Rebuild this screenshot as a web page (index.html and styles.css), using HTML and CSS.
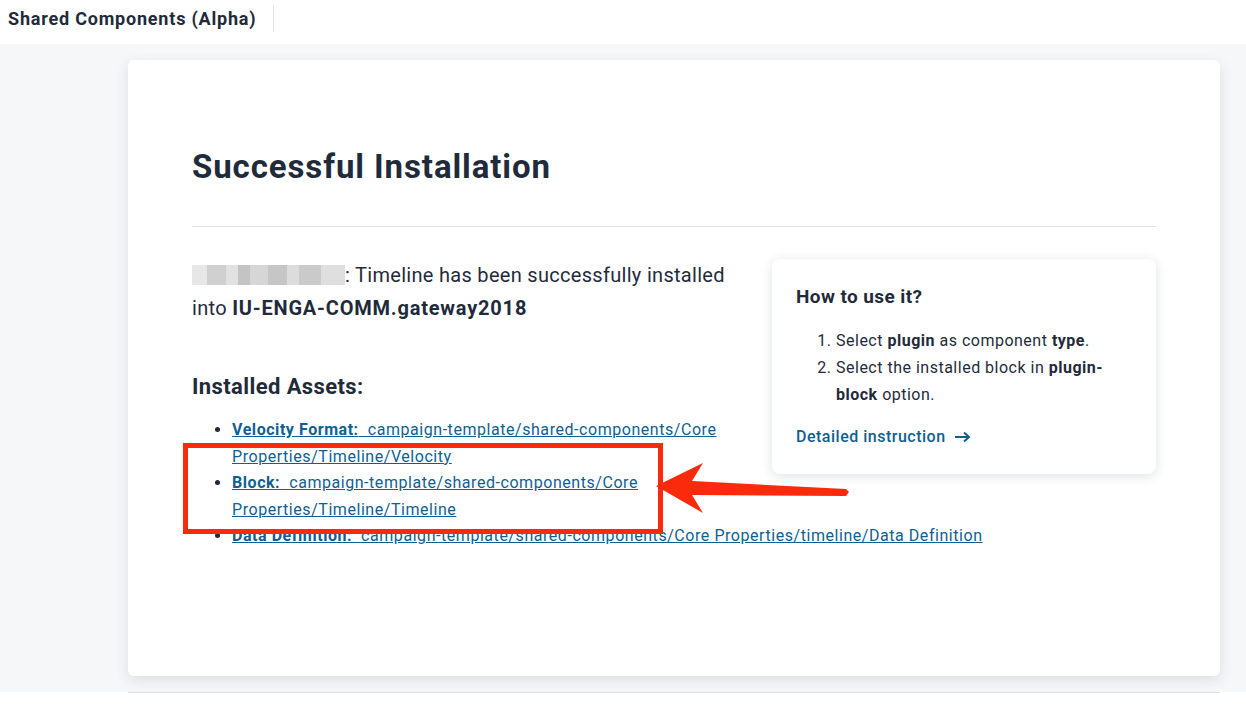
FILE: index.html
```html
<!DOCTYPE html>
<html lang="en">
<head>
    <meta charset="UTF-8">
    <meta name="viewport" content="width=device-width, initial-scale=1.0">
    <title>Shared Components (Alpha)</title>
    <link rel="stylesheet" href="styles.css">
</head>
<body>
    <div class="topbar">
        <span class="app-title">Shared Components (Alpha)</span>
        <span class="divider"></span>
    </div>

    <div class="main">
        <div class="card">
            <h1>Successful Installation</h1>
            <hr>

            <div class="howto">
                <h3>How to use it?</h3>
                <ol>
                    <li>Select <b>plugin</b> as component <b>type</b>.</li>
                    <li>Select the installed block in <b>plugin-block</b> option.</li>
                </ol>
                <a href="#" class="more">Detailed instruction
                    <svg class="arrow" width="17" height="12" viewBox="0 0 17 12"><path d="M1 6h14M10 1.5l5 4.5-5 4.5" fill="none" stroke="currentColor" stroke-width="2"/></svg>
                </a>
            </div>

            <p class="intro"><span class="blurred"></span>: Timeline has been successfully installed into <b>IU-ENGA-COMM.gateway2018</b></p>

            <h2>Installed Assets:</h2>
            <ul class="assets">
                <li><a href="#"><b>Velocity Format:</b>&nbsp; campaign-template/shared-components/Core Properties/Timeline/Velocity</a></li>
                <li><a href="#"><b>Block:</b>&nbsp; campaign-template/shared-components/Core Properties/Timeline/Timeline</a></li>
                <li><a href="#"><b>Data Definition:</b>&nbsp; campaign-template/shared-components/Core Properties/timeline/Data Definition</a></li>
            </ul>
        </div>
    </div>
    <div class="footer"></div>

    <!-- annotation drawn over the screenshot -->
    <svg class="annotation" width="1246" height="704" viewBox="0 0 1246 704">
        <rect x="185.5" y="445.5" width="475" height="86" fill="none" stroke="#fb2a0c" stroke-width="5"/>
        <polygon fill="#fb2a0c" points="656,486 703,463 692,481 846,489 849,492 846,496 692,495 703,513"/>
    </svg>
</body>
</html>
```

FILE: styles.css
```css
body {
    margin: 0;
    font-family: Roboto, "Liberation Sans", sans-serif;
    color: #1f2b3b;
    background: #fff;
}

.topbar {
    height: 44px;
    display: flex;
    align-items: flex-start;
    background: #fff;
}

.app-title {
    padding: 8px 0 0 8px;
    font-size: 18px;
    line-height: 22px;
    font-weight: bold;
    letter-spacing: 0.8px;
    color: #1f2b3b;
}

.divider {
    width: 1px;
    height: 27px;
    margin: 5px 0 0 17px;
    background: #e3e5e8;
}

.main {
    background: #f6f7f9;
    padding: 16px 26px 16px 128px;
}

.card {
    background: #fff;
    border-radius: 6px;
    box-shadow: 0 4px 14px rgba(30, 40, 60, 0.12);
    padding: 79px 64px 53px 64px;
    height: 484px;
}

h1 {
    margin: 0;
    font-size: 33px;
    line-height: 56px;
    font-weight: bold;
    letter-spacing: 0.9px;
}

hr {
    border: 0;
    border-top: 1px solid #dfe2e6;
    margin: 31px 0 32px 0;
}

.howto {
    float: right;
    width: 336px;
    margin: 0 0 16px 40px;
    padding: 24px;
    border-radius: 8px;
    box-shadow: 0 2px 12px rgba(30, 40, 60, 0.14);
    font-size: 16px;
    letter-spacing: 0.5px;
}

.howto h3 {
    margin: 0 0 16px 0;
    font-size: 19px;
    line-height: 28px;
    letter-spacing: 0.4px;
}

.howto ol {
    margin: 0 0 16px 0;
    padding-left: 40px;
    line-height: 27px;
}

.more {
    color: #0f5f93;
    font-weight: 500;
    text-decoration: none;
    line-height: 26px;
}

.more .arrow {
    margin-left: 4px;
    vertical-align: -1px;
}

.intro {
    margin: 0;
    font-size: 20px;
    line-height: 33px;
    letter-spacing: 0.3px;
}

.intro b {
    letter-spacing: 0.8px;
}

.blurred {
    display: inline-block;
    width: 153px;
    height: 20px;
    vertical-align: -3px;
    background:
        linear-gradient(90deg, #e2e2e2 0 10%, #c7c7c7 10% 22%, #dcdcdc 22% 30%, #b9b9b9 30% 38%, #cfcfcf 38% 50%, #bcbcbc 50% 62%, #d6d6d6 62% 70%, #c1c1c1 70% 84%, #d9d9d9 84% 100%);
    opacity: 0.85;
}

h2 {
    margin: 46px 0 14px 0;
    font-size: 22px;
    line-height: 32px;
    letter-spacing: 0.4px;
}

.assets {
    margin: 0;
    padding-left: 40px;
    font-size: 16px;
    line-height: 26.5px;
    letter-spacing: 0.55px;
}

.assets a {
    color: #0f5f93;
    text-decoration: underline;
}

.footer {
    margin-left: 128px;
    width: 1092px;
    border-top: 1px solid #dcdfe3;
    height: 11px;
}

.annotation {
    position: absolute;
    left: 0;
    top: 0;
    pointer-events: none;
}
```
